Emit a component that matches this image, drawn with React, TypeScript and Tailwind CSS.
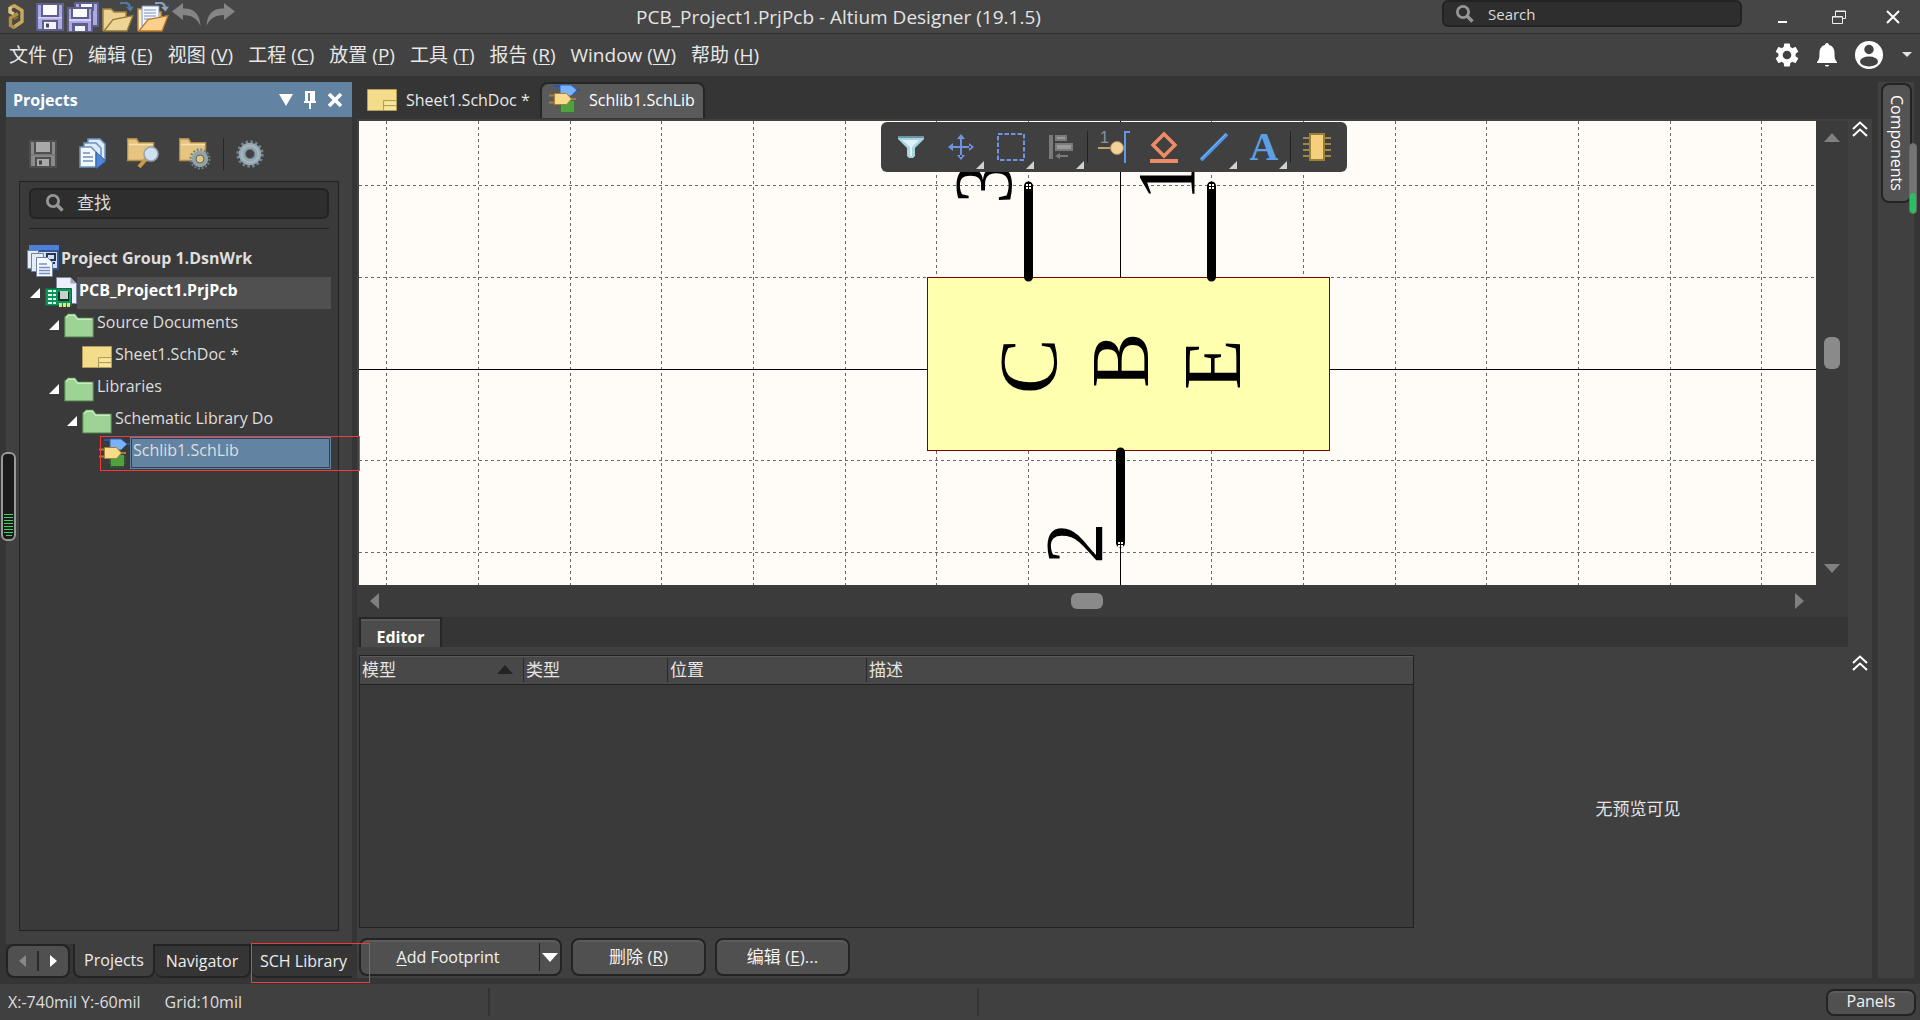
import type { ReactNode } from "react";

const FONT = "font-['Open_Sans','Noto_Sans_CJK_SC',sans-serif]";
const BUTTON =
  "rounded-lg border-2 border-[#232323] bg-[#505050] shadow-[inset_0_2px_0_#5c5c5c] leading-6 text-[#f2f2f2]";

const menus = [
  { label: "文件", hotkey: "F" },
  { label: "编辑", hotkey: "E" },
  { label: "视图", hotkey: "V" },
  { label: "工程", hotkey: "C" },
  { label: "放置", hotkey: "P" },
  { label: "工具", hotkey: "T" },
  { label: "报告", hotkey: "R" },
  { label: "Window", hotkey: "W" },
  { label: "帮助", hotkey: "H" },
];

const gridX = [27, 119, 211, 302, 394, 486, 577, 669, 852, 944, 1036, 1127, 1219, 1311, 1402];
const gridY = [64, 156, 339, 431];

/* ---------- icons ---------- */

function LogoIcon() {
  return (
    <svg width="17" height="25" viewBox="0 0 17 25" fill="none" strokeWidth="3.4">
      <path d="M2 3.5 6.5 1.8 14 6.5v11L6 23" stroke="#c9a75a" />
      <path d="M2 3v5l4 2" stroke="#e0c684" />
      <path d="M10 9.5 2.5 14v7.5L7 24" stroke="#b08f45" />
      <path d="M6 15.5 10 13" stroke="#8d7134" strokeWidth="2" />
    </svg>
  );
}

function Floppy({ muted = false }: { muted?: boolean }) {
  return (
    <svg width="28" height="28" viewBox="0 0 28 28">
      <path d="M0 0h28v28H0z" fill={muted ? "#4f4f4f" : "#5d5f8c"} />
      <path d="M2 2h24v24H2z" fill={muted ? "#8a8a8a" : "#aea8e0"} />
      <path d="M5 1h18v13H5z" fill={muted ? "#4f4f4f" : "#5d5f8c"} />
      <path d="M7 2h14v10H7z" fill={muted ? "#a9a9a9" : "#fbfbfb"} />
      <path d="M2 14h24v1.5H2z" fill={muted ? "#777" : "#d5d0f3"} />
      <path d="M6 17h16v10H6z" fill={muted ? "#4f4f4f" : "#5d5f8c"} />
      <path d="M8 19h12v7H8z" fill={muted ? "#a9a9a9" : "#f4f4f4"} />
      <path d="M10 20.5h3v4h-3z" fill={muted ? "#444" : "#45476e"} />
    </svg>
  );
}

function SaveAllIcon() {
  return (
    <svg width="32" height="30" viewBox="0 0 32 30">
      <path d="M7 0h25v25H7z" fill="#5d5f8c" />
      <path d="M9 2h21v21H9z" fill="#aea8e0" />
      <path d="M12 1h15v8H12z" fill="#5d5f8c" />
      <path d="M14 2h11v6H14z" fill="#fbfbfb" />
      <path d="M0 5h26v25H0z" fill="#5d5f8c" />
      <path d="M2 7h22v22H2z" fill="#aea8e0" />
      <path d="M4 6h18v11H4z" fill="#5d5f8c" />
      <path d="M6 7h14v8H6z" fill="#fbfbfb" />
      <path d="M2 17h22v2H2z" fill="#d5d0f3" />
      <path d="M5 21h16v8H5z" fill="#5d5f8c" />
      <path d="M8 24h10v5H8z" fill="#f4f4f4" />
    </svg>
  );
}

function OpenIcon({ doc = false }: { doc?: boolean }) {
  return (
    <svg width="32" height="30" viewBox="0 0 32 30">
      <path d="M1 29V7h8l3 3h12v5" fill={doc ? "#fff2d8" : "#ecd192"} stroke={doc ? "#c98b3a" : "#a08645"} strokeWidth="1.5" />
      {doc && (
        <>
          <path d="M5 4h17v20H5z" fill="#f5f8ff" stroke="#7d92bd" />
          <path d="M7 8h12M7 11h12M7 14h12M7 17h9" stroke="#7c90bd" />
        </>
      )}
      <path d="M2 29 11 17.5 31 13.5 25 29z" fill={doc ? "#fbd08d" : "#efd595"} stroke={doc ? "#b97b2d" : "#8f783f"} strokeWidth="1.3" />
      <path d="M18 1.5c6-2 10-.5 10 5" fill="none" stroke={doc ? "#8aa5bb" : "#4f7ba6"} strokeWidth="2.2" />
      <path d="m24 5 8-.5-3.5 5z" fill={doc ? "#8aa5bb" : "#4f7ba6"} />
    </svg>
  );
}

function UndoIcon({ flip = false }: { flip?: boolean }) {
  return (
    <svg width="30" height="24" viewBox="0 0 30 24" className={flip ? "-scale-x-100" : ""}>
      <path d="M0 8.500 11 0v5.500C22 5 28 11 28.500 23 25 15.500 20 12 11 12v5z" fill="#858585" />
    </svg>
  );
}

function SearchIcon() {
  return (
    <svg width="18" height="18" viewBox="0 0 18 18" fill="none" stroke="#969696" className="shrink-0">
      <circle cx="7" cy="7" r="5.6" strokeWidth="2.8" />
      <path d="m11 11 5.5 5.5" strokeWidth="3.4" />
    </svg>
  );
}

function SheetIcon() {
  return (
    <svg width="30" height="22" viewBox="0 0 30 22" className="shrink-0">
      <path d="M.5.5h29v21H.5z" fill="#f3dd8a" stroke="#b39d5e" />
      <path d="M18 18h11v3H18zM18 13h11v3H18z" fill="#f9e69d" />
      <path d="M16.500 21.500v-10h13M16.500 16.500h13" fill="none" stroke="#b39d5e" />
    </svg>
  );
}

function SchLibIcon() {
  return (
    <svg width="31" height="31" viewBox="0 0 31 31" className="shrink-0">
      <path d="M5 2h6M25 6h6" stroke="#2058a8" strokeWidth="2" />
      <path d="M11 1h11l6 5-6 6H11z" fill="#79b2ff" stroke="#2c66b8" />
      <path d="M12 17v13M15 18v12M18 18v12M21 18v12M24 17v13M10 19h17M10 22h17M10 25h17" stroke="#2f7b2f" />
      <path d="M12 17h13v11H12z" fill="#4fa23f" />
      <path d="M0 11.500h6M0 18.500h6M21 15h6" stroke="#a38235" strokeWidth="2" />
      <path d="M5.500 9.500h12l5 5.500-5 5.500h-12z" fill="#f7dc8c" stroke="#a38235" />
    </svg>
  );
}

function GreenFolder() {
  return (
    <svg width="30" height="25" viewBox="0 0 30 25" className="shrink-0">
      <path d="M.7 24V4L4 1h7l3 4h15.300v19z" fill="#9dd394" stroke="#4f7d4a" strokeWidth="1.200" />
      <path d="M2 4.500 4.500 2.200h6l3 4H28" fill="none" stroke="#c9ecc3" strokeWidth="1.400" />
    </svg>
  );
}

function GroupIcon() {
  return (
    <svg width="32" height="32" viewBox="0 0 32 32" className="shrink-0">
      <path d="M2 0h30v25H2z" fill="#34558f" />
      <path d="M2 0h30v5H2z" fill="#4d80dd" />
      <path d="M4 7h26v16H4z" fill="#d5def0" />
      <path d="M20 9h8v6h-8zM22 18h6" fill="none" stroke="#26344f" strokeWidth="2" />
      <path d="M.5 5.500h11v18H.5z" fill="#e4ecf8" stroke="#6d83aa" />
      <path d="M4.500 8.500h12v18h-12z" fill="#e4ecf8" stroke="#6d83aa" />
      <path d="M9.500 12.500h11l5 5v14h-16z" fill="#f6f9ff" stroke="#6d83aa" />
      <path d="M12 19h8M12 22.500h11M12 25.500h11M12 28.500h11" stroke="#7890b9" strokeWidth="1.400" />
    </svg>
  );
}

function PcbIcon() {
  return (
    <svg width="32" height="32" viewBox="0 0 32 32" className="shrink-0">
      <path d="M11.500.500h14l6 6v20h-20z" fill="#edf0fb" stroke="#8189a6" />
      <path d="M25.500.500v6h6z" fill="#9aa3c1" />
      <path d="M.500 11.500h26v17H.500z" fill="#12905c" stroke="#067044" />
      <path d="M3 14h4M3 18h4M3 22h4M3 26h4M8 14h3M8 18h3M8 22h3M8 26h3" stroke="#d9f5e8" strokeWidth="2" />
      <path d="M13 15h11v9H13z" fill="#0a3a27" />
      <path d="M15 14h8v8h-8z" fill="#c9cfcb" />
      <path d="M14 26h3v4h-3zM18 26h3v4h-3zM22 26h3v4h-3z" fill="#e8e56a" />
    </svg>
  );
}

function CopyDocsIcon() {
  return (
    <svg width="28" height="32" viewBox="0 0 28 32">
      <path d="M9 1h12l5 5v16H9z" fill="#dcebfa" stroke="#6f93bd" strokeWidth="1.500" />
      <path d="M5 5h12l5 5v15H5z" fill="#dcebfa" stroke="#6f93bd" strokeWidth="1.500" />
      <path d="M1 9h11l5 5v15H1z" fill="#f3f8ff" stroke="#6f93bd" strokeWidth="1.500" />
      <path d="M4 15h7M4 19h10M4 23h10" stroke="#6f93bd" strokeWidth="1.600" />
      <path d="m17 14 10 9-10 8z" fill="#4f86d6" stroke="#2f5fa8" />
    </svg>
  );
}

function FolderTool({ kind }: { kind: "find" | "gear" }) {
  return (
    <svg width="32" height="32" viewBox="0 0 32 32">
      <path d="M.500 22.500V.800h9l2.500 4h14.500v17.700z" fill="#e6c581" stroke="#b08c47" strokeWidth="1.500" />
      <path d="M2 6.500h24" stroke="#f6e1b3" strokeWidth="1.500" />
      {kind === "find" ? (
        <>
          <path d="m19 21-7 8" stroke="#c79b4d" strokeWidth="4" />
          <circle cx="24" cy="16" r="7" fill="#cfe0ef" stroke="#95a5b3" strokeWidth="1.600" />
        </>
      ) : (
        <>
          <circle cx="21" cy="21" r="9.500" fill="none" stroke="#6f8080" strokeWidth="2" strokeDasharray="2 1.730" />
          <circle cx="21" cy="21" r="6" fill="#e6c581" stroke="#91a3a6" strokeWidth="4.500" />
          <circle cx="21" cy="21" r="4" fill="none" stroke="#5d6a6a" />
        </>
      )}
    </svg>
  );
}

function BlueGear() {
  return (
    <svg width="28" height="28" viewBox="0 0 28 28" fill="none">
      <circle cx="14" cy="14" r="12" stroke="#71828c" strokeWidth="3.400" strokeDasharray="2.600 2.110" />
      <circle cx="14" cy="14" r="8" stroke="#94a6b0" strokeWidth="6.500" />
      <circle cx="14" cy="14" r="8.500" stroke="#a9b9c2" strokeWidth="1.500" />
      <circle cx="14" cy="14" r="4.500" stroke="#66757e" strokeWidth="1.200" />
    </svg>
  );
}

function Chevrons() {
  return (
    <svg width="16" height="16" viewBox="0 0 16 16" fill="none" stroke="#fff" strokeWidth="2">
      <path d="m1 8 7-6.500L15 8M1 15l7-6.500 7 6.500" />
    </svg>
  );
}

function Triangle({ dir, className }: { dir: "up" | "down" | "left" | "right"; className: string }) {
  const points = {
    up: "0,9 8,0 16,9",
    down: "0,0 16,0 8,9",
    left: "9,0 9,16 0,8",
    right: "0,0 9,8 0,16",
  };
  const tall = dir === "left" || dir === "right";
  return (
    <svg width={tall ? 9 : 16} height={tall ? 16 : 9} className={className}>
      <polygon points={points[dir]} fill="currentColor" />
    </svg>
  );
}

/* ---------- top bars ---------- */

function TitleBar() {
  return (
    <header className="flex h-[34px] shrink-0 items-center border-b border-[#2f2f2f] bg-[#464646] pl-2">
      <div className="flex h-full items-center gap-[3px]">
        <span className="mr-2"><LogoIcon /></span>
        <button aria-label="Save"><Floppy /></button>
        <button aria-label="Save all"><SaveAllIcon /></button>
        <button aria-label="Open"><OpenIcon /></button>
        <button aria-label="Open project"><OpenIcon doc /></button>
        <button aria-label="Undo" className="pb-1"><UndoIcon /></button>
        <button aria-label="Redo" className="pb-1"><UndoIcon flip /></button>
      </div>
      <h1 className="flex-1 text-center text-[19px] leading-6 text-[#e4e4e4]">
        PCB_Project1.PrjPcb - Altium Designer (19.1.5)
      </h1>
      <label className="mb-1.5 flex h-[27px] w-[300px] items-center rounded-md border-2 border-[#232323] bg-[#2e2e2e] pl-3">
        <SearchIcon />
        <input
          aria-label="Search"
          placeholder="Search"
          className="ml-[14px] w-full bg-transparent text-[15px] leading-5 outline-none placeholder:text-[#dcdcdc]"
        />
      </label>
      <div className="flex h-full items-center gap-10 pr-5 pl-9 text-white">
        <button aria-label="Minimize">
          <svg width="14" height="14"><path d="M0 12h9" stroke="#fff" strokeWidth="2" /></svg>
        </button>
        <button aria-label="Restore">
          <svg width="14" height="14" fill="none" stroke="#eee">
            <path d="M3.500 6V1h10v7.500h-3M.500 6.500h10v7H.500zM3.500 1.500h10M.500 7h10" />
          </svg>
        </button>
        <button aria-label="Close">
          <svg width="14" height="14"><path d="m1 1 12 12M13 1 1 13" stroke="#fff" strokeWidth="2" /></svg>
        </button>
      </div>
    </header>
  );
}

function MenuBar() {
  return (
    <nav className="flex h-[42px] shrink-0 items-center justify-between bg-[#424242] pr-[7px] pl-[9px]">
      <div className="flex gap-[15px]">
        {menus.map((m) => (
          <button key={m.hotkey} className="text-[19px] leading-6 text-[#e8e8e8]">
            {m.label} (<u className="underline-offset-2">{m.hotkey}</u>)
          </button>
        ))}
      </div>
      <div className="flex items-center gap-[18px]">
        <button aria-label="Settings">
          <svg width="24" height="24" viewBox="2 2 20 20" fill="#fff">
            <path d="M19.140 12.940c.04-.3.060-.610.060-.940s-.020-.640-.070-.940l2.030-1.580c.180-.140.230-.410.120-.610l-1.920-3.320c-.120-.220-.370-.290-.590-.220l-2.390.960c-.500-.380-1.030-.700-1.620-.940l-.360-2.540c-.040-.240-.240-.410-.480-.410h-3.840c-.240 0-.430.170-.470.410l-.360 2.540c-.590.240-1.130.570-1.620.940l-2.390-.960c-.220-.080-.470 0-.590.220L2.740 8.870c-.120.210-.080.470.120.610l2.030 1.580c-.050.300-.090.630-.090.940s.020.640.070.940l-2.030 1.580c-.180.140-.230.410-.120.610l1.920 3.320c.120.220.370.290.590.220l2.390-.960c.500.380 1.030.700 1.620.940l.360 2.540c.050.240.240.410.480.410h3.840c.240 0 .440-.170.470-.410l.360-2.540c.590-.240 1.130-.560 1.620-.940l2.390.960c.220.080.470 0 .590-.220l1.920-3.320c.120-.220.070-.470-.120-.610l-2.010-1.580zM12 15.600a3.600 3.600 0 1 1 0-7.200 3.600 3.600 0 0 1 0 7.200z" />
          </svg>
        </button>
        <button aria-label="Notifications">
          <svg width="20" height="24" viewBox="0 0 20 24" fill="#fff">
            <path d="M10 0c1.400 0 2 1 2 2 4 1 5.500 4 5.500 8 0 5 .500 7 2.500 9v1H0v-1c2-2 2.500-4 2.500-9 0-4 1.500-7 5.500-8 0-1 .600-2 2-2zM8 22h4c0 2-4 2-4 0z" />
          </svg>
        </button>
        <button aria-label="Account">
          <svg width="28" height="28" viewBox="0 0 28 28">
            <circle cx="14" cy="14" r="14" fill="#fff" />
            <circle cx="14" cy="8.500" r="4.700" fill="#424242" />
            <ellipse cx="14" cy="20.500" rx="9" ry="5" fill="#424242" />
          </svg>
        </button>
        <button aria-label="Account menu">
          <svg width="12" height="6"><path d="M1 0h10L6 5z" fill="#e4e4e4" /></svg>
        </button>
      </div>
    </nav>
  );
}

/* ---------- projects panel ---------- */

type TreeRowProps = {
  icon: ReactNode;
  text: string;
  indent: string;
  arrow?: boolean;
  bold?: boolean;
  active?: boolean;
  selected?: boolean;
};

function TreeRow({ icon, text, indent, arrow, bold, active, selected }: TreeRowProps) {
  return (
    <li className={`relative flex h-8 items-center ${indent}`}>
      {arrow !== undefined && (
        <span className="w-[15px] shrink-0">
          {arrow && <svg width="10" height="10"><path d="M10 0v10H0z" fill="#fff" /></svg>}
        </span>
      )}
      {icon}
      <span
        className={`flex h-full flex-1 items-center overflow-hidden pb-1.5 text-[16px] leading-6 whitespace-nowrap ${
          bold ? "pl-[2px] font-bold" : selected ? "pl-px" : "pl-[3px]"
        } ${active ? "bg-[#505050] text-white" : "text-[#dedede]"} ${
          selected ? "border-2 border-[#2f4257] bg-[#6383a2] outline outline-1 -outline-offset-1 outline-[#6383a2]" : ""
        }`}
      >
        {text}
      </span>
      {selected && (
        <span className="pointer-events-none absolute -top-px right-[-29px] left-[73px] z-20 h-[35px] border border-[#f23a3a]" />
      )}
    </li>
  );
}

function ProjectsPanel() {
  return (
    <aside className="flex w-[346px] shrink-0 flex-col">
      <div className="flex h-[35px] shrink-0 items-center justify-between bg-[#6383a2] pr-[9px] pl-[7px]">
        <h2 className="text-[16px] leading-6 font-bold text-white">Projects</h2>
        <div className="flex items-center gap-[11px]">
          <button aria-label="Panel menu">
            <svg width="14" height="12"><path d="M0 0h14L7 12z" fill="#fff" /></svg>
          </button>
          <button aria-label="Pin">
            <svg width="12" height="18" fill="#fff">
              <path d="M1 0h10v10h1v2H7v6H5v-6H0v-2h1zM4 2v8h2V2z" fillRule="evenodd" />
            </svg>
          </button>
          <button aria-label="Close panel">
            <svg width="16" height="16"><path d="m2 2 12 12M14 2 2 14" stroke="#fff" strokeWidth="3.600" /></svg>
          </button>
        </div>
      </div>

      <div className="flex min-h-0 flex-1 flex-col bg-[#404040] px-[13px] pb-[13px]">
        <div className="flex h-[64px] shrink-0 items-center gap-5 pt-[10px] pl-[10px]">
          <button aria-label="Save"><Floppy muted /></button>
          <button aria-label="Compile" className="ml-0.5"><CopyDocsIcon /></button>
          <button aria-label="Explore"><FolderTool kind="find" /></button>
          <button aria-label="Project options"><FolderTool kind="gear" /></button>
          <span className="-mx-2 h-8 w-px bg-[#262626]" />
          <button aria-label="Panel settings"><BlueGear /></button>
        </div>

        <div className="min-h-0 flex-1 border border-[#222] bg-[#3a3a3a] py-[6px] pl-[7px]">
          <label className="mr-[9px] ml-[2px] flex h-[31px] items-center rounded-md border-2 border-[#232323] bg-[#2e2e2e] pb-0.5 pl-[15px]">
            <SearchIcon />
            <input
              aria-label="查找"
              placeholder="查找"
              className="ml-[13px] w-full bg-transparent text-[17px] leading-6 outline-none placeholder:text-[#dcdcdc]"
            />
          </label>
          <hr className="mt-[9px] mr-[9px] ml-[2px] border-[#222]" />
          <ul className="mt-4 mr-[7px]">
            <TreeRow icon={<GroupIcon />} text="Project Group 1.DsnWrk" indent="pl-0" bold />
            <TreeRow icon={<PcbIcon />} text="PCB_Project1.PrjPcb" indent="pl-[3px]" arrow bold active />
            <TreeRow icon={<GreenFolder />} text="Source Documents" indent="pl-[22px]" arrow />
            <TreeRow icon={<SheetIcon />} text="Sheet1.SchDoc *" indent="pl-[40px]" arrow={false} />
            <TreeRow icon={<GreenFolder />} text="Libraries" indent="pl-[22px]" arrow />
            <TreeRow icon={<GreenFolder />} text="Schematic Library Do" indent="pl-[40px]" arrow />
            <TreeRow icon={<SchLibIcon />} text="Schlib1.SchLib" indent="pl-[57px]" arrow={false} selected />
          </ul>
        </div>
      </div>

      <div className="flex h-[34px] shrink-0 text-[16px] leading-6 text-[#ececec]">
        <div className="mr-[3px] flex w-[64px] items-center rounded-lg border-2 border-[#232323] bg-[#505050]">
          <button aria-label="Previous" className="flex flex-1 justify-center">
            <svg width="7" height="12"><path d="M7 0v12L0 6z" fill="#888" /></svg>
          </button>
          <span className="h-5 w-0.5 bg-[#2a2a2a]" />
          <button aria-label="Next" className="flex flex-1 justify-center">
            <svg width="7" height="12"><path d="M0 0v12l7-6z" fill="#fff" /></svg>
          </button>
        </div>
        <button className="w-[82px] rounded-b-lg border-2 border-t-0 border-[#232323] bg-[#404040]">Projects</button>
        <button className="w-[96px] rounded-b-lg border-2 border-l-0 border-[#232323] bg-[#353535]">Navigator</button>
        <button className="relative flex-1 rounded-bl-lg border-y-2 border-[#232323] bg-[#353535] pl-1">
          SCH Library
          <span className="pointer-events-none absolute -top-[3px] -right-[18px] left-0 z-20 h-[40px] border border-[#f23a3a]" />
        </button>
      </div>
    </aside>
  );
}

/* ---------- schematic canvas ---------- */

function SchematicCanvas() {
  return (
    <svg className="absolute inset-0 h-full w-full bg-[#fffcf8]" shapeRendering="crispEdges">
      <g stroke="#6e6767" strokeDasharray="3 3">
        {gridX.map((x) => (
          <line key={x} x1={x + 0.5} x2={x + 0.5} y1="0" y2="100%" />
        ))}
        {gridY.map((y) => (
          <line key={y} x1="0" x2="100%" y1={y + 0.5} y2={y + 0.5} />
        ))}
      </g>
      <path d="M761.500 0v2000M0 248.500h4000" stroke="#000" />
      <rect x="568.500" y="156.500" width="402" height="173" fill="#ffffb0" stroke="#800000" />
      <g stroke="#000" strokeWidth="9" strokeLinecap="round" shapeRendering="auto">
        <path d="M669.500 65v91M852.500 65v91M761.500 331v91" />
      </g>
      <g stroke="#fff" strokeWidth="2" strokeDasharray="2 1">
        <path d="M667 63.500h5M667 66.500h5M850 63.500h5M850 66.500h5M759 421.500h5M759 424.500h5" />
      </g>
      <g className="font-['Liberation_Serif',serif] text-[83px]" fill="#000" shapeRendering="auto">
        <text transform="translate(697 273) rotate(-90)">C</text>
        <text transform="translate(789 267) rotate(-90)">B</text>
        <text transform="translate(881 269) rotate(-90)">E</text>
        <text transform="translate(652 83) rotate(-90)">3</text>
        <text transform="translate(835 80) rotate(-90)">1</text>
        <text transform="translate(743 443) rotate(-90)">2</text>
      </g>
    </svg>
  );
}

function ToolButton({ label, more, children }: { label: string; more?: boolean; children: ReactNode }) {
  return (
    <button aria-label={label} className="relative flex h-full w-[50px] items-center justify-center">
      {children}
      {more && (
        <svg width="8" height="8" className="absolute right-[2px] bottom-[3px]"><path d="M8 0v8H0z" fill="#d0d0d0" /></svg>
      )}
    </button>
  );
}

function FloatingToolbar() {
  return (
    <div className="absolute top-px left-[522px] flex h-[50px] items-center rounded-md bg-[#404040] px-[5px]">
      <ToolButton label="Filter">
        <svg width="26" height="24" viewBox="0 0 26 24">
          <path d="M0 1h26v3l-9 9v8l-2 2h-4l-2-2v-8L0 4z" fill="#a9d5df" />
          <path d="M0 1h26v2H0z" fill="#6c93a5" />
          <path d="M4 5h17l-7 7v9h-2v-9z" fill="#dff3f7" />
        </svg>
      </ToolButton>
      <ToolButton label="Move" more>
        <svg width="26" height="26" viewBox="0 0 26 26" fill="#6f93e0">
          <path d="M12 3h2v20h-2zM3 12h20v2H3zM13 0l4 5H9zM13 26l4-5H9zM0 13l5-4v8zM26 13l-5-4v8z" />
        </svg>
      </ToolButton>
      <ToolButton label="Select area" more>
        <svg width="28" height="28"><rect x="1" y="1" width="26" height="26" fill="none" stroke="#6f93e0" strokeWidth="2" strokeDasharray="4.500 2" /></svg>
      </ToolButton>
      <ToolButton label="Align" more>
        <svg width="26" height="24" viewBox="0 0 26 24">
          <path d="M1 0h4v24H1zM7 0h12v6H7zM7 8h18v8H7zM12 20h8v2h-8zM7 21l5-3v6z" fill="#7a7a7a" />
          <path d="M9 2h8v2H9zM9 10h14v4H9z" fill="#9a9a9a" />
        </svg>
      </ToolButton>
      <span className="mx-px h-8 w-px bg-[#222]" />
      <ToolButton label="Place pin">
        <svg width="32" height="34" viewBox="0 0 32 34">
          <text x="2" y="13" fontSize="16" fill="#8d949c" className="font-['Liberation_Sans',sans-serif]">1</text>
          <path d="M0 18h14" stroke="#c0a065" strokeWidth="2" />
          <circle cx="19" cy="18" r="6.500" fill="#f1d29b" stroke="#a98b5a" />
          <path d="M27 33V2h5" fill="none" stroke="#6296e6" strokeWidth="2" />
        </svg>
      </ToolButton>
      <ToolButton label="Place ground">
        <svg width="28" height="32" viewBox="0 0 28 32" fill="none" stroke="#ee8c67">
          <path d="M14 3 25 14 14 25 3 14z" strokeWidth="3.500" />
          <path d="M0 30h28" strokeWidth="4" />
        </svg>
      </ToolButton>
      <ToolButton label="Place line" more>
        <svg width="28" height="28"><path d="m1 27 26-26" stroke="#4f94e0" strokeWidth="4" /><path d="m1 26 25-25" stroke="#7db6f2" strokeWidth="1" /></svg>
      </ToolButton>
      <ToolButton label="Place text" more>
        <span className="font-['Liberation_Serif',serif] text-[40px] leading-[40px] font-bold text-[#5c9fe6]">A</span>
      </ToolButton>
      <span className="mx-px h-8 w-px bg-[#222]" />
      <ToolButton label="Place part">
        <svg width="28" height="28" viewBox="0 0 28 28">
          <path d="M0 5h28M0 11h28M0 17h28M0 23h28" stroke="#a18841" strokeWidth="2" />
          <path d="M6 0h16v28H6z" fill="#9a8038" />
          <path d="M8 2h12v24H8z" fill="#f5cf7c" />
        </svg>
      </ToolButton>
    </div>
  );
}

/* ---------- main column ---------- */

function DocumentTabs() {
  return (
    <div className="flex h-[37px] shrink-0 text-[16px] leading-6 text-[#e8e8e8]">
      <button className="flex w-[183px] items-center gap-[9px] pb-0.5 pl-[10px]">
        <SheetIcon />
        Sheet1.SchDoc *
      </button>
      <button className="flex h-[36px] w-[165px] items-center gap-[9px] rounded-t-lg border-2 border-b-0 border-[#262626] bg-[#5a5a5a] pb-[3px] pl-[7px] whitespace-nowrap text-white">
        <SchLibIcon />
        Schlib1.SchLib
      </button>
    </div>
  );
}

function ModelEditor() {
  return (
    <section className="flex h-[331px] shrink-0 bg-[#404040] pl-[2px]">
      <div className="flex flex-1 flex-col pt-2 pb-[2px]">
        <div className="min-h-0 flex-1 border border-[#222] bg-[#3a3a3a]">
          <table className="w-full table-fixed border-b border-[#222] bg-[#484848] text-left text-[17px] leading-6 text-[#e4e4e4] shadow-[inset_0_1px_0_#5a5a5a]">
            <thead>
              <tr className="h-7">
                <th scope="col" className="w-[164px] py-0 pl-[2px] font-normal">
                  <span className="flex items-center justify-between border-r border-[#2a2a2a] pr-[10px]">
                    模型
                    <Triangle dir="up" className="text-[#232323]" />
                  </span>
                </th>
                <th scope="col" className="w-[144px] py-0 pl-[2px] font-normal">
                  <span className="block border-r border-[#2a2a2a]">类型</span>
                </th>
                <th scope="col" className="w-[199px] py-0 pl-[2px] font-normal">
                  <span className="block border-r border-[#2a2a2a]">位置</span>
                </th>
                <th scope="col" className="py-0 pl-[2px] font-normal">描述</th>
              </tr>
            </thead>
          </table>
        </div>
        <div className="mt-[10px] flex h-[38px] shrink-0 gap-[9px]">
          <div className={`flex w-[203px] items-center text-[16px] ${BUTTON}`}>
            <button className="flex-1 pr-1"><u className="underline-offset-2">A</u>dd Footprint</button>
            <span className="h-7 w-px bg-[#222]" />
            <button aria-label="More footprints" className="flex w-5 justify-center">
              <Triangle dir="down" className="text-white" />
            </button>
          </div>
          <button className={`w-[135px] text-[17px] ${BUTTON}`}>删除 (<u className="underline-offset-2">R</u>)</button>
          <button className={`w-[135px] text-[17px] ${BUTTON}`}>编辑 (<u className="underline-offset-2">E</u>)...</button>
        </div>
      </div>
      <div className="flex w-[458px]">
        <p className="flex-1 self-center pb-2 pl-[14px] text-center text-[17px] leading-6 text-[#e4e4e4]">无预览可见</p>
        <button aria-label="Collapse preview" className="flex w-6 justify-center self-start pt-2">
          <Chevrons />
        </button>
      </div>
    </section>
  );
}

function Workspace() {
  return (
    <main className="mr-px flex min-w-0 flex-1 flex-col">
      <DocumentTabs />
      <div className="flex min-h-0 flex-1">
        <div className="flex min-w-0 flex-1 flex-col">
          <div className="flex min-h-0 flex-1 border-t-2 border-l-2 border-[#404040]">
            <div className="relative min-w-0 flex-1 overflow-hidden">
              <SchematicCanvas />
              <FloatingToolbar />
            </div>
            <div className="flex w-8 flex-col items-center justify-between bg-[#3b3b3b] py-3">
              <Triangle dir="up" className="text-[#808080]" />
              <span className="h-8 w-4 rounded-md bg-[#8a8a8a]" />
              <Triangle dir="down" className="text-[#808080]" />
            </div>
          </div>
          <div className="flex h-8 shrink-0 items-center justify-between bg-[#3b3b3b] pr-[44px] pl-[13px]">
            <Triangle dir="left" className="text-[#808080]" />
            <span className="h-4 w-8 rounded-md bg-[#8a8a8a]" />
            <Triangle dir="right" className="text-[#808080]" />
          </div>
          <div className="h-[30px] shrink-0 pl-[2px]">
            <button className="h-full w-[83px] border-2 border-b-0 border-[#262626] bg-[#4c4c4c] pt-[6px] text-[16px] leading-6 font-bold text-white shadow-[inset_0_2px_0_#5a5a5a]">
              Editor
            </button>
          </div>
        </div>
        <div className="w-6 bg-[#404040]">
          <button aria-label="Collapse panel" className="flex w-full justify-center pt-[2px]">
            <Chevrons />
          </button>
        </div>
      </div>
      <ModelEditor />
    </main>
  );
}

function ComponentsRail() {
  return (
    <aside className="relative w-9 shrink-0 bg-[#404040] pt-px pl-[3px]">
      <button className="h-[120px] w-[31px] rounded-lg border-2 border-[#232323] bg-[#535353] text-[16px] leading-6 text-white [writing-mode:vertical-rl]">
        Components
      </button>
      <div className="absolute top-[61px] -right-[3px] flex h-[71px] w-2 flex-col justify-end rounded-full border border-[#6a6a6a] bg-[#757575]">
        <span className="h-5 rounded-full bg-[#27c060]" />
      </div>
    </aside>
  );
}

function LevelMeter() {
  return (
    <div className="absolute top-[452px] left-px z-10 flex h-[89px] w-[15px] flex-col items-center justify-end gap-[2px] rounded-md border-2 border-[#999] bg-[#1a1a1a] pb-[3px]">
      {[0, 1, 2, 3, 4, 5, 6].map((i) => (
        <span key={i} className="h-px w-[9px] bg-[#3fd468]" />
      ))}
      <span className="h-px w-[6px] bg-[#3fd468]" />
    </div>
  );
}

function StatusBar() {
  return (
    <footer className="flex h-9 shrink-0 items-center bg-[#404040] pr-1 pl-2 text-[16px] leading-6 text-[#dedede]">
      <div className="flex w-[480px] gap-6">
        <span>X:-740mil Y:-60mil</span>
        <span>Grid:10mil</span>
      </div>
      <span className="h-7 w-0.5 bg-[#333]" />
      <span className="ml-[487px] h-7 w-0.5 bg-[#333]" />
      <button className={`ml-auto flex h-[27px] w-[90px] items-center justify-center pb-0.5 ${BUTTON}`}>Panels</button>
    </footer>
  );
}

export default function App() {
  return (
    <div className={`relative flex h-screen flex-col overflow-hidden bg-[#353535] ${FONT}`}>
      <TitleBar />
      <MenuBar />
      <div className="flex min-h-0 flex-1 gap-[5px] p-[6px]">
        <ProjectsPanel />
        <Workspace />
        <ComponentsRail />
      </div>
      <LevelMeter />
      <StatusBar />
    </div>
  );
}
